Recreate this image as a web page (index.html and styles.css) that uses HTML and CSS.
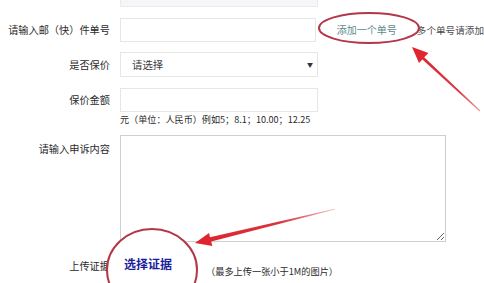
FILE: index.html
```html
<!DOCTYPE html>
<html lang="zh">
<head>
<meta charset="utf-8">
<link rel="stylesheet" href="styles.css">
</head>
<body>
<div class="page">
  <form class="form">
    <div class="row row-top">
      <label class="label">收件人手机</label>
      <div class="input input-top"></div>
    </div>
    <div class="row row-track">
      <label class="label">请输入邮（快）件单号</label>
      <div class="input"></div>
      <a class="add-link">添加一个单号</a>
      <span class="add-note">多个单号请添加</span>
    </div>
    <div class="row row-select">
      <label class="label">是否保价</label>
      <div class="select"><span>请选择</span><span class="caret">▼</span></div>
    </div>
    <div class="row row-amount">
      <label class="label">保价金额</label>
      <div class="field">
        <div class="input"></div>
        <div class="hint">元（单位：人民币）例如5；8.1；10.00；12.25</div>
      </div>
    </div>
    <div class="row row-content">
      <label class="label label-top">请输入申诉内容</label>
      <textarea class="textarea"></textarea>
    </div>
    <div class="row row-upload">
      <label class="label label-upload">上传证据</label>
      <a class="upload-btn">选择证据</a>
      <span class="upload-note">（最多上传一张小于1M的图片）</span>
    </div>
  </form>
  <svg class="marks" width="484" height="283" viewBox="0 0 484 283" xmlns="http://www.w3.org/2000/svg">
    <defs>
      <linearGradient id="g1" x1="412" y1="47" x2="480" y2="111" gradientUnits="userSpaceOnUse">
        <stop offset="0" stop-color="#e0222c"/>
        <stop offset="0.7" stop-color="#d83a44"/>
        <stop offset="1" stop-color="#e9a0a6"/>
      </linearGradient>
      <linearGradient id="g2" x1="195" y1="243" x2="335" y2="209" gradientUnits="userSpaceOnUse">
        <stop offset="0" stop-color="#e0222c"/>
        <stop offset="0.6" stop-color="#d8343e"/>
        <stop offset="1" stop-color="#eec0c4"/>
      </linearGradient>
    </defs>
    <ellipse cx="369" cy="28" rx="50" ry="15" fill="none" stroke="#b33649" stroke-width="2"/>
    <ellipse cx="152" cy="270" rx="45" ry="41" fill="#ffffff" stroke="#b33649" stroke-width="2"/>
    <polygon fill="url(#g1)" points="412,47 428.5,53 424.2,57.2 480.4,110.6 479.6,111.4 422.4,59.6 419,63"/>
    <polygon fill="url(#g2)" points="195,243 209,233 210,237.2 335,208.8 335.1,209.4 211.2,241.5 212.3,246"/>
  </svg>
</div>
</body>
</html>
```
FILE: styles.css
```css
html, body {
  margin: 0;
  padding: 0;
  background: #ffffff;
}
.page {
  position: relative;
  width: 484px;
  height: 283px;
  overflow: hidden;
  font-family: "Noto Sans CJK SC", "Noto Sans", sans-serif;
  color: #2a2a2a;
}
.form {
  display: flex;
  flex-direction: column;
  margin-top: -17px;
}
.row {
  display: flex;
  align-items: flex-start;
}
.label {
  width: 110px;
  margin-right: 10px;
  flex-shrink: 0;
  text-align: right;
  font-size: 10.2px;
  line-height: 24px;
  white-space: nowrap;
  color: #2a2a2a;
}
.input {
  box-sizing: border-box;
  width: 198px;
  height: 24px;
  border: 1px solid #e6e6e6;
  background: #ffffff;
}
.input-top {
  background: #f6f6f8;
  border-color: #ebebef;
}
.row-track {
  margin-top: 11px;
  position: relative;
}
.add-link {
  position: relative;
  z-index: 2;
  margin-left: 21px;
  font-size: 10px;
  line-height: 24px;
  color: #5a8a8c;
  white-space: nowrap;
}
.add-note {
  margin-left: 20px;
  font-size: 9.6px;
  line-height: 24px;
  color: #4a4a4a;
  white-space: nowrap;
}
.row-select {
  margin-top: 10px;
}
.row-select .label {
  line-height: 25px;
}
.select {
  box-sizing: border-box;
  width: 198px;
  height: 25px;
  border: 1px solid #e6e6e6;
  display: flex;
  align-items: center;
  justify-content: space-between;
  padding: 0 4px 0 11px;
  font-size: 10.4px;
  color: #3a3a3a;
}
.caret {
  font-size: 6px;
  color: #333333;
}
.row-amount {
  margin-top: 11px;
}
.field {
  display: flex;
  flex-direction: column;
}
.hint {
  font-size: 9.1px;
  line-height: 14px;
  color: #2a2a2a;
  white-space: nowrap;
}
.row-content {
  margin-top: 9px;
}
.label-top {
  line-height: 14px;
  padding-top: 7px;
}
.textarea {
  box-sizing: border-box;
  width: 326px;
  height: 107px;
  margin: 0;
  border: 1px solid #cfcfcf;
  background: #ffffff;
  resize: both;
  outline: none;
}
.row-upload {
  margin-top: 14px;
  position: relative;
}
.label-upload {
  line-height: 20px;
}
.upload-btn {
  position: relative;
  z-index: 2;
  margin-left: 4px;
  margin-top: -2px;
  font-size: 12px;
  line-height: 20px;
  font-weight: bold;
  color: #1c1c9c;
  white-space: nowrap;
}
.upload-note {
  position: relative;
  z-index: 2;
  margin-left: 34px;
  margin-top: 5px;
  font-size: 9.2px;
  line-height: 20px;
  color: #2a2a2a;
  white-space: nowrap;
}
.marks {
  position: absolute;
  left: 0;
  top: 0;
  z-index: 1;
  pointer-events: none;
}
```
